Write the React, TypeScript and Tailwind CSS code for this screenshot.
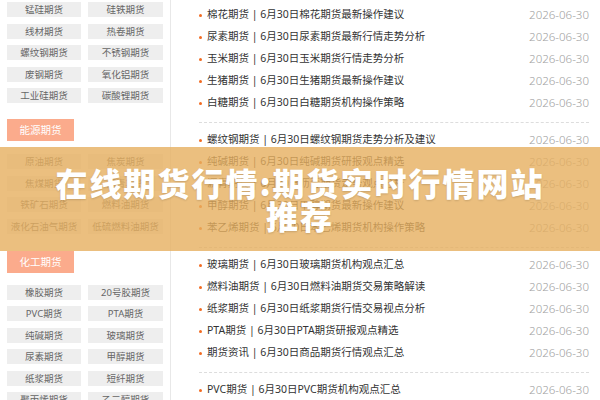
const font = { fontFamily: '"Noto Sans", "Noto Sans CJK SC", sans-serif' };

const metals = [
  ["锰硅期货", "硅铁期货"],
  ["线材期货", "热卷期货"],
  ["螺纹钢期货", "不锈钢期货"],
  ["废钢期货", "氧化铝期货"],
  ["工业硅期货", "碳酸锂期货"],
];

const energy = [
  ["原油期货", "焦炭期货"],
  ["焦煤期货", "沥青期货"],
  ["铁矿石期货", "燃料油期货"],
  ["液化石油气期货", "低硫燃料油期货"],
];

const chemical = [
  ["橡胶期货", "20号胶期货"],
  ["PVC期货", "PTA期货"],
  ["纯碱期货", "玻璃期货"],
  ["尿素期货", "甲醇期货"],
  ["纸浆期货", "短纤期货"],
  ["聚丙烯期货", "乙二醇期货"],
];

const groups = [
  [
    "棉花期货 | 6月30日棉花期货最新操作建议",
    "尿素期货 | 6月30日尿素期货最新行情走势分析",
    "玉米期货 | 6月30日玉米期货行情走势分析",
    "生猪期货 | 6月30日生猪期货最新操作建议",
    "白糖期货 | 6月30日白糖期货机构操作策略",
  ],
  [
    "螺纹钢期货 | 6月30日螺纹钢期货走势分析及建议",
    "纯碱期货 | 6月30日纯碱期货研报观点精选",
    "沥青期货 | 6月30日沥青期货走势观点分析",
    "甲醇期货 | 6月30日甲醇期货最新操作建议",
    "苯乙烯期货 | 6月30日苯乙烯期货机构操作策略",
  ],
  [
    "玻璃期货 | 6月30日玻璃期货机构观点汇总",
    "燃料油期货 | 6月30日燃料油期货交易策略解读",
    "纸浆期货 | 6月30日纸浆期货行情交易视点分析",
    "PTA期货 | 6月30日PTA期货研报观点精选",
    "期货资讯 | 6月30日商品期货行情观点汇总",
  ],
  ["PVC期货 | 6月30日PVC期货机构观点汇总"],
];

function ButtonGrid(props: { rows: string[][] }): JSX.Element {
  return (
    <div className="grid grid-cols-[74px_75px] gap-x-[7px] gap-y-[6.5px]">
      {props.rows.flat().map((name) => (
        <div
          key={name}
          className="h-[15px] bg-[#eeeeee] text-[#666] text-[9.5px] leading-[15px] text-center whitespace-nowrap"
        >
          {name}
        </div>
      ))}
    </div>
  );
}

function SectionHeader(props: { title: string }): JSX.Element {
  return (
    <div className="w-[67px] h-[22px] bg-[#fbab8c] text-white text-[10.5px] leading-[22px] text-center">
      {props.title}
    </div>
  );
}

function NewsItem(props: { title: string }): JSX.Element {
  return (
    <div className="h-[22px] flex items-center justify-between">
      <span className="flex items-center text-[#333] text-[10.5px] whitespace-nowrap">
        <span className="w-[3px] h-[3px] rounded-full bg-[#f26b21] mr-[5px]" />
        {props.title}
      </span>
      <span className="text-[#a0a0a0] text-[11.5px] font-light">2026-06-30</span>
    </div>
  );
}

export default function App(): JSX.Element {
  return (
    <div className="relative w-[600px] h-[400px] overflow-hidden bg-white" style={font}>
      <div className="flex h-full">
        <div className="w-[171px] shrink-0 border-r border-[#e8e8e8] px-[7px] pt-[2px]">
          <ButtonGrid rows={metals} />
          <div className="mt-[16px] mb-[13px]">
            <SectionHeader title="能源期货" />
          </div>
          <ButtonGrid rows={energy} />
          <div className="mt-[17px] mb-[12px]">
            <SectionHeader title="化工期货" />
          </div>
          <ButtonGrid rows={chemical} />
        </div>
        <div className="flex-1 pl-[28px] pr-[11px] pt-[4px]">
          {groups.map((group, i) => (
            <div key={i}>
              {group.map((t) => (
                <NewsItem key={t} title={t} />
              ))}
              {i < groups.length - 1 && (
                <div className="border-b border-dashed border-[#dddddd] mt-[8px] mb-[6px]" />
              )}
            </div>
          ))}
        </div>
      </div>
      {/* banner over the content */}
      <div className="absolute left-0 right-0 top-[147px] h-[104px] bg-[rgba(230,175,95,0.8)] flex items-center justify-center">
        <div
          className="w-[510px] text-center text-white font-black text-[32px] leading-[33px] tracking-[2px] [text-shadow:0_1px_2px_rgba(0,0,0,0.15)]"
          style={{ fontFamily: '"Noto Sans CJK SC", sans-serif' }}
        >
          在线期货行情:期货实时行情网站推荐
        </div>
      </div>
    </div>
  );
}
